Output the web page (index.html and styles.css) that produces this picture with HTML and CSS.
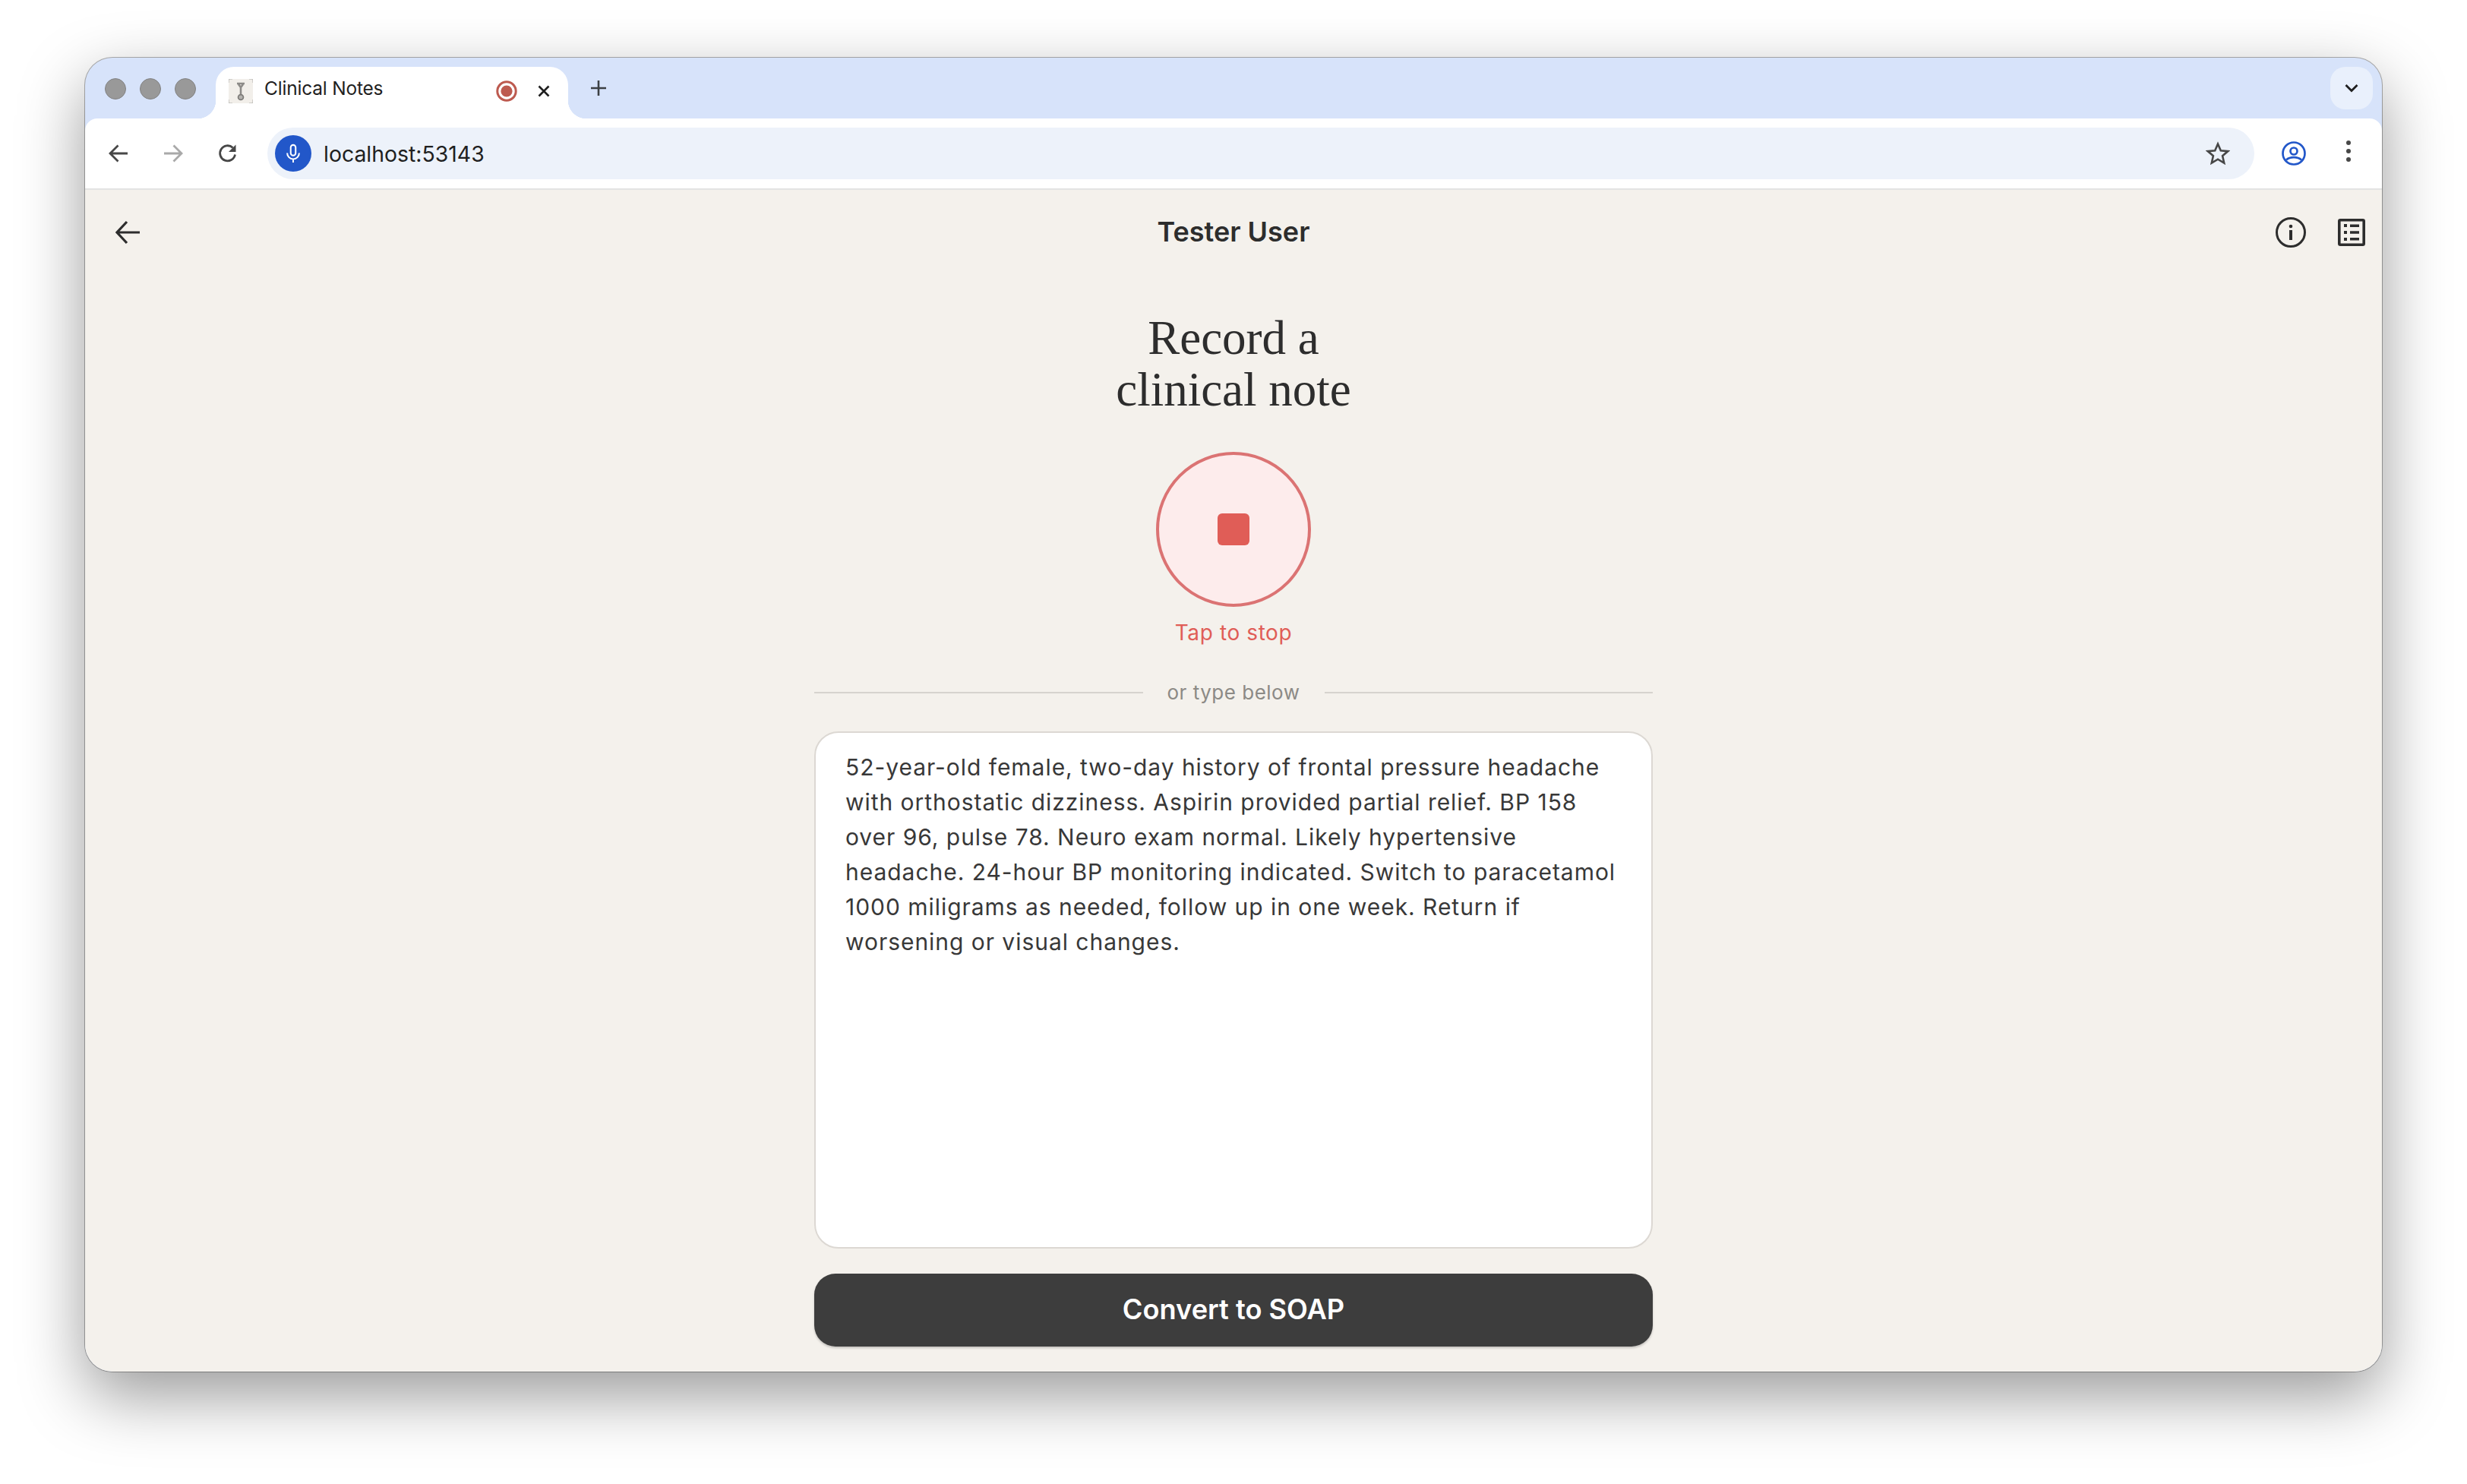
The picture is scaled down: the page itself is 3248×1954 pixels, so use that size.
FILE: index.html
```html
<!DOCTYPE html>
<html lang="en">
<head>
    <meta charset="UTF-8">
    <title>Clinical Notes</title>
    <link rel="stylesheet" href="styles.css">
</head>
<body>
    <div class="window">
        <div class="tabstrip">
            <div class="lights">
                <span class="light"></span>
                <span class="light"></span>
                <span class="light"></span>
            </div>
            <div class="tab">
                <svg class="favicon" viewBox="0 0 32 32">
                    <rect width="32" height="32" rx="3" fill="#f2efea"/>
                    <path d="M0 5V2q0-2 2-2h3M27 0h3q2 0 2 2v3M32 27v3q0 2-2 2h-3M5 32H2q-2 0-2-2v-3" fill="none" stroke="#c4c2be" stroke-width="1.5"/>
                    <path d="M11 6h10M13 7l3 4 3-4M16 10v11" fill="none" stroke="#8d8b88" stroke-width="2.6"/>
                    <circle cx="16" cy="24" r="3.4" fill="#b5b3af" stroke="#7f7d7a" stroke-width="1.8"/>
                </svg>
                <span class="tab-title">Clinical Notes</span>
                <svg class="rec-icon" viewBox="0 0 28 28">
                    <circle cx="14" cy="14" r="12.2" fill="none" stroke="#bd5a4f" stroke-width="3"/>
                    <circle cx="14" cy="14" r="7.6" fill="#bd5a4f"/>
                </svg>
                <svg class="tab-close" viewBox="0 0 20 20">
                    <path d="M3.5 3.5l13 13M16.5 3.5l-13 13" fill="none" stroke="#1f1f1f" stroke-width="2.6"/>
                </svg>
            </div>
            <svg class="new-tab" viewBox="0 0 22 22">
                <path d="M11 1v20M1 11h20" fill="none" stroke="#3c4043" stroke-width="2.6"/>
            </svg>
            <div class="tab-search">
                <svg viewBox="0 0 18 12" class="chevron">
                    <path d="M1.5 2l7.5 7.5L16.500 2" fill="none" stroke="#1f1f1f" stroke-width="2.8"/>
                </svg>
            </div>
        </div>

        <div class="toolbar">
            <svg class="nav-icon" viewBox="0 0 28 28">
                <path d="M26 14H4M13.500 3.500L3 14l10.500 10.500" fill="none" stroke="#474747" stroke-width="2.8"/>
            </svg>
            <svg class="nav-icon muted" viewBox="0 0 28 28">
                <path d="M2 14h22M14.500 3.500L25 14 14.500 24.500" fill="none" stroke="#a9a9a9" stroke-width="2.8"/>
            </svg>
            <svg class="nav-icon" viewBox="0 0 28 28">
                <path d="M23.500 15.500A10 10 0 1 1 20.500 6.500" fill="none" stroke="#474747" stroke-width="2.8"/>
                <path d="M24.500 2.500v9.500h-9.500z" fill="#474747"/>
            </svg>
            <div class="omnibox">
                <span class="mic-badge">
                    <svg viewBox="0 0 28 28" class="mic">
                        <rect x="10.500" y="2" width="7" height="15" rx="3.500" fill="none" stroke="#fff" stroke-width="2.200"/>
                        <path d="M5.500 13.500a8.500 8.500 0 0 0 17 0M14 22v5" fill="none" stroke="#fff" stroke-width="2.200"/>
                    </svg>
                </span>
                <span class="url">localhost:53143</span>
                <svg class="star" viewBox="0 0 32 32">
                    <path d="M16 3.500l3.800 8.700 9.400.9-7.100 6.200 2.100 9.200L16 23.700l-8.200 4.800 2.100-9.200-7.100-6.200 9.400-.9z" fill="none" stroke="#474747" stroke-width="2.600"/>
                </svg>
            </div>
            <svg class="profile" viewBox="0 0 32 32">
                <circle cx="16" cy="16" r="14.500" fill="none" stroke="#2257c9" stroke-width="2.700"/>
                <circle cx="16" cy="13" r="4.500" fill="none" stroke="#2257c9" stroke-width="2.700"/>
                <path d="M6 24.500c5-4.500 15-4.500 20 0" fill="none" stroke="#2257c9" stroke-width="2.700"/>
            </svg>
            <div class="kebab">
                <span></span><span></span><span></span>
            </div>
        </div>

        <div class="page">
            <div class="app-bar">
                <svg class="back" viewBox="0 0 32 32">
                    <path d="M32 16H3M15 2L2 16l13 14" fill="none" stroke="#2d2d2d" stroke-width="3.200"/>
                </svg>
                <div class="user-name">Tester User</div>
                <svg class="info" viewBox="0 0 40 40">
                    <circle cx="20" cy="20" r="18.500" fill="none" stroke="#2d2d2d" stroke-width="3"/>
                    <circle cx="20" cy="12" r="2.300" fill="#2d2d2d"/>
                    <rect x="18" y="17" width="4" height="13" fill="#2d2d2d"/>
                </svg>
                <svg class="notes" viewBox="0 0 36 36">
                    <rect x="1.800" y="1.800" width="32.400" height="32.400" rx="1.500" fill="none" stroke="#2d2d2d" stroke-width="3.600"/>
                    <path d="M8 7h4v4H8zM8 16h4v4H8zM8 25h4v4H8zM16 7.500h12v3.500H16zM16 16.300h12v3.500H16zM16 25h12v3.500H16z" fill="#2d2d2d"/>
                </svg>
            </div>

            <div class="content">
                <h1 class="title">Record a<br>clinical note</h1>
                <button class="record-btn"><span class="stop-square"></span></button>
                <div class="record-hint">Tap to stop</div>
                <div class="divider"><span>or type below</span></div>
                <div class="note-box">52-year-old female, two-day history of frontal pressure headache with orthostatic dizziness. Aspirin provided partial relief. BP 158 over 96, pulse 78. Neuro exam normal. Likely hypertensive headache. 24-hour BP monitoring indicated. Switch to paracetamol 1000 miligrams as needed, follow up in one week. Return if worsening or visual changes.</div>
                <button class="convert-btn">Convert to SOAP</button>
            </div>
        </div>
    </div>
</body>
</html>
```

FILE: styles.css
```css
* {
    box-sizing: border-box;
}

html, body {
    margin: 0;
    height: 100%;
}

body {
    background-color: #fff;
    padding: 76px 112px 148px;
    font-family: 'Inter', 'Liberation Sans', sans-serif;
    color: #2d2d2d;
    overflow: hidden;
}

.window {
    height: 1730px;
    display: flex;
    flex-direction: column;
    background-color: #d7e3fa;
    border-radius: 36px;
    overflow: hidden;
    box-shadow: 0 0 0 1px rgba(0, 0, 0, 0.3), 0 32px 86px rgba(0, 0, 0, 0.4);
}

/* browser chrome */
.tabstrip {
    height: 80px;
    display: flex;
    align-items: flex-end;
    padding-left: 26px;
    flex-shrink: 0;
}

.lights {
    display: flex;
    gap: 18px;
    align-self: flex-start;
    margin-top: 27px;
}

.light {
    width: 28px;
    height: 28px;
    border-radius: 50%;
    background-color: #999;
    border: 1px solid #828282;
}

.tab {
    position: relative;
    width: 464px;
    height: 68px;
    margin-left: 26px;
    padding-left: 17px;
    display: flex;
    align-items: center;
    background-color: #fff;
    border-radius: 24px 24px 0 0;
}

.tab::before, .tab::after {
    content: "";
    position: absolute;
    bottom: 0;
    width: 24px;
    height: 24px;
}

.tab::before {
    left: -24px;
    background: radial-gradient(circle at 0 0, transparent 24px, #fff 24.5px);
}

.tab::after {
    right: -24px;
    background: radial-gradient(circle at 100% 0, transparent 24px, #fff 24.5px);
}

.favicon {
    width: 32px;
    height: 32px;
    margin-top: -4px;
}

.tab-title {
    margin-left: 15px;
    margin-top: -12px;
    width: 286px;
    font-size: 24.5px;
    letter-spacing: -0.2px;
    color: #1f1f1f;
}

.rec-icon {
    width: 28px;
    height: 28px;
    margin-left: 19px;
    margin-top: -4px;
}

.tab-close {
    width: 20px;
    height: 20px;
    margin-left: 25px;
    margin-top: -4px;
}

.new-tab {
    width: 22px;
    height: 22px;
    margin-left: 29px;
    align-self: flex-start;
    margin-top: 29px;
}

.tab-search {
    width: 56px;
    height: 56px;
    margin-left: auto;
    margin-right: 12px;
    align-self: flex-start;
    margin-top: 12px;
    display: flex;
    align-items: center;
    justify-content: center;
    background-color: #e9f0fc;
    border-radius: 20px;
}

.chevron {
    width: 18px;
    height: 12px;
}

.toolbar {
    height: 94px;
    flex-shrink: 0;
    display: flex;
    align-items: flex-start;
    padding: 12px 0 0 30px;
    background-color: #fff;
    border-radius: 16px 16px 0 0;
    border-bottom: 2px solid #e3e3e3;
}

.nav-icon {
    width: 28px;
    height: 28px;
    margin-top: 20px;
    margin-right: 44px;
}

.omnibox {
    width: 2616px;
    height: 68px;
    margin-left: -6px;
    flex-shrink: 0;
    display: flex;
    align-items: center;
    padding: 0 32px 0 10px;
    background-color: #edf2fa;
    border-radius: 34px;
}

.mic-badge {
    width: 48px;
    height: 48px;
    display: flex;
    align-items: center;
    justify-content: center;
    background-color: #2257c9;
    border-radius: 50%;
}

.mic {
    width: 26px;
    height: 26px;
}

.url {
    margin-left: 16px;
    font-size: 28.4px;
    color: #1f1f1f;
}

.star {
    width: 32px;
    height: 32px;
    margin-left: auto;
}

.profile {
    width: 32px;
    height: 32px;
    margin-left: 36px;
    margin-top: 18px;
    flex-shrink: 0;
}

.kebab {
    display: flex;
    flex-direction: column;
    gap: 5px;
    margin-left: 53px;
    margin-top: 17px;
}

.kebab span {
    width: 6px;
    height: 6px;
    border-radius: 50%;
    background-color: #474747;
}

/* app page */
.page {
    flex: 1;
    display: flex;
    flex-direction: column;
    background-color: #f4f1ec;
}

.app-bar {
    height: 112px;
    flex-shrink: 0;
    display: flex;
    align-items: center;
    padding: 0 22px 0 40px;
}

.back {
    width: 32px;
    height: 32px;
}

.user-name {
    flex: 1;
    text-align: center;
    font-size: 36px;
    font-weight: 600;
    margin-top: -2px;
    padding-left: 68px;
}

.info {
    width: 40px;
    height: 40px;
}

.notes {
    width: 36px;
    height: 36px;
    margin-left: 42px;
}

.content {
    width: 1104px;
    margin: 0 auto;
    display: flex;
    flex-direction: column;
    align-items: center;
}

.title {
    margin: 49px 0 0;
    text-align: center;
    font-family: 'Liberation Serif', serif;
    font-weight: 400;
    font-size: 63px;
    line-height: 68px;
    color: #2d2d2d;
}

.record-btn {
    width: 204px;
    height: 204px;
    margin-top: 48px;
    padding: 0;
    display: flex;
    align-items: center;
    justify-content: center;
    background-color: #fdecec;
    border: 4px solid #db7373;
    border-radius: 50%;
}

.stop-square {
    width: 42px;
    height: 42px;
    background-color: #e05d57;
    border-radius: 6px;
}

.record-hint {
    margin-top: 17px;
    font-size: 28px;
    line-height: 34px;
    letter-spacing: 0.6px;
    color: #e05d57;
}

.divider {
    width: 100%;
    margin-top: 46px;
    display: flex;
    align-items: center;
    gap: 32px;
    font-size: 26px;
    line-height: 32px;
    letter-spacing: 0.5px;
    color: #8c8a86;
}

.divider::before, .divider::after {
    content: "";
    flex: 1;
    height: 2px;
    background-color: #d6d3ce;
}

.note-box {
    width: 100%;
    height: 681px;
    margin-top: 35px;
    padding: 22px 38px 22px 39px;
    background-color: #fff;
    border: 2px solid #dcd8d3;
    border-radius: 32px;
    font-size: 30px;
    line-height: 46px;
    letter-spacing: 0.96px;
    color: #383838;
}

.convert-btn {
    width: 100%;
    height: 96px;
    margin-top: 33px;
    padding-bottom: 3px;
    background-color: #3d3d3d;
    border: none;
    border-radius: 28px;
    box-shadow: 0 2px 3px rgba(0, 0, 0, 0.2);
    font-family: inherit;
    font-size: 36.2px;
    font-weight: 600;
    color: #fff;
}
```
